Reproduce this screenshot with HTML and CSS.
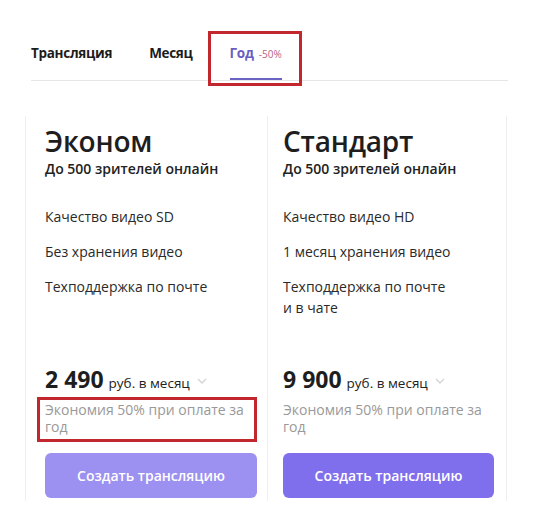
FILE: index.html
```html
<!DOCTYPE html>
<html lang="ru">
<head>
<meta charset="utf-8">
<link rel="stylesheet" href="styles.css">
</head>
<body>
<div class="page">
  <nav class="tabs">
    <span class="tab">Трансляция</span>
    <span class="tab">Месяц</span>
    <span class="tab active">Год <span class="discount">-50%</span></span>
  </nav>
  <div class="mark mark-tab"></div>

  <div class="cards">
    <section class="card card-1">
      <h2 class="title">Эконом</h2>
      <p class="subtitle">До 500 зрителей онлайн</p>
      <ul class="features">
        <li>Качество видео SD</li>
        <li>Без хранения видео</li>
        <li>Техподдержка по почте</li>
      </ul>
      <div class="bottom">
        <div class="price"><span class="amount">2 490</span> <span class="unit">руб. в месяц</span>
          <svg class="chev" width="10" height="6" viewBox="0 0 10 6"><path d="M1 1l4 4 4-4" fill="none" stroke="#d4d4d4" stroke-width="1.4"/></svg>
        </div>
        <p class="save">Экономия 50% при оплате за год</p>
        <button class="btn btn-light">Создать трансляцию</button>
      </div>
    </section>
    <section class="card card-2">
      <h2 class="title">Стандарт</h2>
      <p class="subtitle">До 500 зрителей онлайн</p>
      <ul class="features">
        <li>Качество видео HD</li>
        <li>1 месяц хранения видео</li>
        <li>Техподдержка по почте<br>и в чате</li>
      </ul>
      <div class="bottom">
        <div class="price"><span class="amount">9 900</span> <span class="unit">руб. в месяц</span>
          <svg class="chev" width="10" height="6" viewBox="0 0 10 6"><path d="M1 1l4 4 4-4" fill="none" stroke="#d4d4d4" stroke-width="1.4"/></svg>
        </div>
        <p class="save">Экономия 50% при оплате за год</p>
        <button class="btn">Создать трансляцию</button>
      </div>
    </section>
  </div>
  <div class="mark mark-save"></div>
</div>
</body>
</html>
```

FILE: styles.css
```css
* { box-sizing: border-box; }
body {
  margin: 0;
  background: #fff;
  font-family: "Open Sans", "Liberation Sans", sans-serif;
  color: #222;
}
.page {
  position: relative;
  width: 538px;
  height: 527px;
  overflow: hidden;
}
.tabs {
  display: flex;
  gap: 37px;
  margin: 43px 30px 0 31px;
  border-bottom: 1px solid #e6e6e6;
}
.tab {
  font-size: 13.5px;
  font-weight: 700;
  line-height: 20px;
  padding-bottom: 16px;
  color: #1c1c1c;
  letter-spacing: -0.3px;
}
.tab.active {
  color: #6a5fc0;
  border-bottom: 2px solid #6a63c2;
  padding-bottom: 14px;
}
.discount {
  font-size: 10px;
  font-weight: 400;
  color: #b96283;
  letter-spacing: 0;
  margin-left: 2px;
}
.mark {
  position: absolute;
  border: 3px solid #c1272d;
}
.mark-tab { left: 208px; top: 31px; width: 94px; height: 55px; }
.mark-save { left: 37px; top: 397px; width: 220px; height: 45px; }

.cards {
  display: flex;
  margin: 35px 0 0 25px;
  height: 385px;
}
.card {
  display: flex;
  flex-direction: column;
  border-left: 1px solid #efefef;
  padding-top: 9px;
  padding-bottom: 3px;
}
.card-1 { width: 242px; padding-left: 19px; padding-right: 10px; }
.card-2 { width: 240px; padding-left: 15px; padding-right: 12px; border-right: 1px solid #efefef; }
.title {
  margin: 0;
  font-size: 28px;
  line-height: 32px;
  font-weight: 600;
  color: #1e1e1e;
  letter-spacing: -0.2px;
}
.subtitle {
  margin: 2px 0 0;
  font-size: 14px;
  font-weight: 600;
  line-height: 20px;
  color: #222;
}
.features {
  list-style: none;
  margin: 27px 0 0;
  padding: 0;
  display: flex;
  flex-direction: column;
  gap: 14px;
}
.features li {
  font-size: 14px;
  line-height: 21px;
  color: #2a2a2a;
}
.bottom { margin-top: auto; }
.price {
  display: flex;
  align-items: baseline;
  line-height: 28px;
}
.amount { font-size: 23px; font-weight: 700; color: #1e1e1e; }
.unit { font-size: 13.5px; color: #222; margin-left: 5px; }
.chev { margin-left: 7px; align-self: center; }
.save {
  margin: 4px 0 0;
  font-size: 14px;
  line-height: 17px;
  color: #999;
}
.btn {
  display: block;
  width: 100%;
  height: 45px;
  margin-top: 18px;
  border: 0;
  border-radius: 6px;
  background: #7f6fec;
  color: #fff;
  font-family: inherit;
  font-size: 14px;
  font-weight: 600;
}
.btn-light { background: #9c90f0; }
```
